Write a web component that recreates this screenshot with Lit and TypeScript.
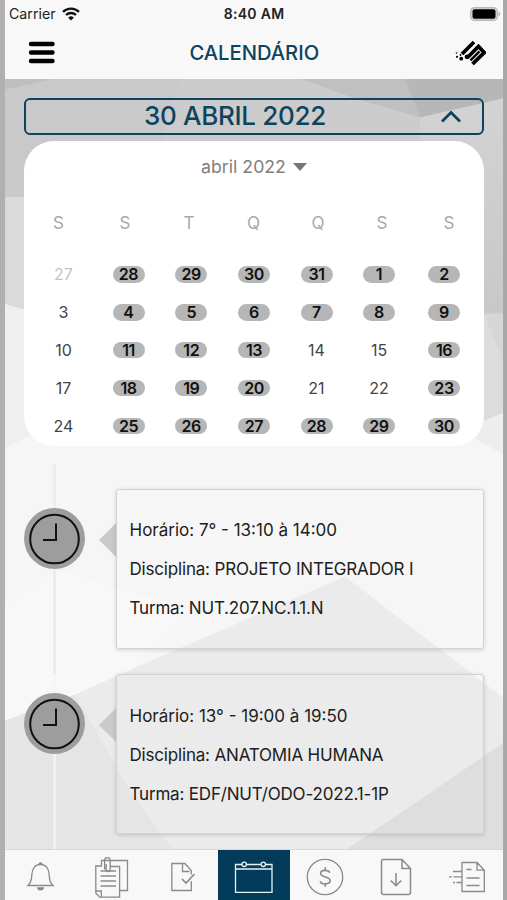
import { LitElement, html, css, svg } from "lit";
import { customElement, property } from "lit/decorators.js";
import { classMap } from "lit/directives/class-map.js";

interface Day { n: number; marked?: boolean; outside?: boolean }
interface Lesson { time: string; subject: string; group: string }

const m = (n: number): Day => ({ n, marked: true });
const p = (n: number): Day => ({ n });

const WEEKDAYS = ["S", "S", "T", "Q", "Q", "S", "S"];
const WEEKS: Day[][] = [
  [{ n: 27, outside: true }, m(28), m(29), m(30), m(31), m(1), m(2)],
  [p(3), m(4), m(5), m(6), m(7), m(8), m(9)],
  [p(10), m(11), m(12), m(13), p(14), p(15), m(16)],
  [p(17), m(18), m(19), m(20), p(21), p(22), m(23)],
  [p(24), m(25), m(26), m(27), m(28), m(29), m(30)],
];
const LESSONS: Lesson[] = [
  { time: "7° - 13:10 à 14:00", subject: "PROJETO INTEGRADOR I", group: "NUT.207.NC.1.1.N" },
  { time: "13° - 19:00 à 19:50", subject: "ANATOMIA HUMANA", group: "EDF/NUT/ODO-2022.1-1P" },
];

const bell = svg`<g transform="translate(-4.500 0)"><path d="M27.500 45.500c3.200-2.600 3.600-5.500 3.800-10.500c.2-6 3.200-10.500 8.700-10.500s8.500 4.500 8.700 10.500c.2 5 .6 7.900 3.800 10.500z"/><path d="M38.500 24.300a1.500 1.500 0 0 1 3 0M37.200 48h5.600c-.6 2.300-5 2.300-5.600 0z" fill="currentColor"/></g>`;
const notes = svg`<g transform="translate(-4 0)"><path d="M30 26h-6.200v27l3.800 4.200h20V26.500H38M23.800 51h5.500v6M29.500 25.500v-5h26v30h-7.500M28.500 31H44M28.500 36H44M28.500 41H44M28.500 46H44"/><path d="M33.700 24.500v5.500a2 2 0 0 0 4 0v-9a2.800 2.800 0 0 0-5.600 0v9" transform="translate(.5 -.5)"/></g>`;
const docCheck = svg`<g transform="translate(-4 0)"><path d="M48.300 41V50.500H28.800V23.500h13l6.500 7v4M39.500 23.500v8h7"/><path d="M39 39l4 4 8.500-9" stroke-width="1.700"/></g>`;
const calendar = svg`<path d="M24 24.500H17.500V52.300H54V24.500h-6.500M43 24.500H28.500M17.500 29H54"/><circle cx="26.200" cy="24.300" r="2.200"/><circle cx="45.300" cy="24.300" r="2.200"/>`;
const dollar = svg`<circle cx="36" cy="37" r="17.700"/><path d="M40.800 32.800c-1-3.200-9.200-3.400-9.200.7s9.600 2.800 9.600 7-9 4.600-10 .8M36.200 27.300v3M36.200 43.500v3.200" stroke-width="1.600"/>`;
const download = svg`<path d="M42 19.500H23.500a2 2 0 0 0-2 2v31a2 2 0 0 0 2 2h25a2 2 0 0 0 2-2V28.500zM42 19.500v9h8.500M36 33v12.500M30.700 40.500l5.300 5.200 5.300-5.200" stroke-width="1.500"/>`;
const send = svg`<path d="M31 22.500h15l7.300 7.700V51.500H31zM46 22.500v7.700h7.300M35.500 29.500h5M35.500 38h13M35.500 45.500h13M22 31.500h9M18 36.800h3M22.500 36.800h8.500M22 42.500h2M25.500 42.500h5.500"/>`;

@customElement("lesson-entry")
class LessonEntry extends LitElement {
  @property({ attribute: false }) lesson!: Lesson;
  static styles = css`
    :host { display: flex; align-items: flex-start; height: 160px; }
    .clock { width: 61px; height: 61px; margin-top: 19px; flex: none; }
    .arrow { width: 17px; height: 34px; margin: 34px 0 0 14px; flex: none; }
    .card {
      flex: 1; height: 160px; box-sizing: border-box; padding: 21.500px 0 0 12.500px;
      border: 1px solid #d2d2d2; border-radius: 3px; box-shadow: 0 1px 4px rgba(0,0,0,.16);
    }
    .line { height: 39px; line-height: 39px; font-size: 17px; letter-spacing: -.18px; color: #202020; white-space: nowrap; }
    .time { letter-spacing: 0; }
  `;
  render() {
    const { time, subject, group } = this.lesson;
    return html`
      <svg class="clock" viewBox="0 0 61 61" fill="none" stroke="#111" stroke-width="2">
        <circle cx="30.500" cy="30.500" r="30.500" fill="#9d9d9d" stroke="none"/>
        <circle cx="30.500" cy="31" r="24.300"/>
        <path d="M32 15.500V32H19"/>
      </svg>
      <svg class="arrow" viewBox="0 0 17 34"><path d="M17 0V34L0 17z" fill="#cacaca"/></svg>
      <div class="card">
        <div class="line time">Horário: ${time}</div>
        <div class="line">Disciplina: ${subject}</div>
        <div class="line">Turma: ${group}</div>
      </div>`;
  }
}

@customElement("app-root")
class AppRoot extends LitElement {
  static styles = css`
    :host {
      display: flex; flex-direction: column; position: relative; box-sizing: border-box;
      width: 507px; height: 900px; overflow: hidden;
      border-left: 5px solid #b0b0b0; border-right: 4px solid #a9a9a9;
      background: #f8f8f8; font-family: Inter, "Liberation Sans", sans-serif;
    }
    .status { display: grid; grid-template-columns: 1fr auto 1fr; align-items: center; height: 27px; padding: 0 2px 0 4px; flex: none; font-size: 14.200px; color: #222; }
    .carrier { display: flex; align-items: center; gap: 6px; }
    .clocktime { font-weight: 600; font-size: 14px; letter-spacing: .3px; margin-right: 2px; }
    .battery { justify-self: end; }
    .nav { display: grid; grid-template-columns: 1fr auto 1fr; align-items: center; height: 51.500px; padding: 0 17px 0 22.500px; flex: none; }
    .title { font-size: 20.200px; font-weight: 500; color: #0c435f; margin-right: 5px; margin-top: -1px; }
    .logo { justify-self: end; }
    svg { display: block; }
    .content { flex: 1; min-height: 0; position: relative; overflow: hidden; }
    .facets { position: absolute; inset: 0; width: 498px; height: 771px; }
    .stack { position: relative; padding: 19.500px 19px 0 19px; }
    .datebar { display: grid; grid-template-columns: 1fr 62px; align-items: center; height: 37px; box-sizing: border-box; border: 2.500px solid #0c4460; border-radius: 6px; color: #0c4460; }
    .date { text-align: center; font-size: 26px; font-weight: 500; letter-spacing: -.3px; line-height: 30px; padding-left: 24px; margin-top: -1px; }
    .chevron { margin-left: 20px; }
    .calendar { height: 305px; margin-top: 6px; box-sizing: border-box; background: #fff; border-radius: 30px; padding-top: 13.500px; }
    .month { display: flex; justify-content: center; align-items: center; gap: 7px; height: 24px; font-size: 17.700px; color: #7e7e7e; }
    .weekdays { display: grid; grid-template-columns: 65px 68px 60px 69px 60px 68px 66px; padding-left: 2px; margin-top: 32px; height: 24px; line-height: 24px; font-size: 17px; color: #a9a9a9; text-align: center; }
    .weeks { margin-top: 21px; }
    .week { display: grid; grid-template-columns: 65px 65px 60.500px 65px 60px 65px 65px; padding-left: 7px; height: 37.850px; align-items: center; justify-items: center; }
    .day { width: 32px; height: 16.500px; line-height: 17px; border-radius: 9px; text-align: center; font-size: 16px; color: #444; }
    .outside { color: #c4c4c4; }
    .marked { background: #b6b6b6; color: #111; font-weight: 600; letter-spacing: -.4px; }
    .timeline { position: relative; display: flex; flex-direction: column; gap: 25.500px; padding-top: 42.500px; }
    .rail { position: absolute; left: 29px; top: 18px; width: 3px; height: 210px; background: rgba(232,232,232,.7); }
    .rail.low { top: 228px; height: 180px; background: rgba(244,244,244,.8); }
    .entry { position: relative; }
    .tabs { display: grid; grid-template-columns: repeat(7, 1fr); height: 50.500px; flex: none; background: #f8f8f8; box-sizing: border-box; box-shadow: 0 -1px 0 #d8d8d8; position: relative; }
    .tab { display: flex; justify-content: center; color: #8a8a8a; overflow: hidden; }
    .active { background: #033c5a; color: #e8f0f4; }
    .glyph { width: 72px; height: 60px; flex: none; margin-top: -9.500px; fill: none; stroke: currentColor; stroke-width: 1.300; }
  `;
  render() {
    return html`
      <div class="status">
        <div class="carrier">Carrier
          <svg width="18" height="14" viewBox="0 0 18 14" fill="none" stroke="#111" stroke-width="2.300">
            <path d="M1 4.800a11.500 11.500 0 0 1 16 0M4 8a7.200 7.200 0 0 1 10 0"/><path d="M9 13.500L6.200 10.700a4 4 0 0 1 5.600 0z" fill="#111" stroke="none"/>
          </svg>
        </div>
        <div class="clocktime">8:40 AM</div>
        <svg class="battery" width="31" height="14" viewBox="0 0 31 14">
          <rect x=".7" y=".7" width="26.600" height="12.600" rx="3.800" fill="#ddd" stroke="#b9b9b9" stroke-width="1.400"/>
          <rect x="2.500" y="2.300" width="23" height="9.400" rx="2" fill="#000"/><path d="M28.500 4.500c2.300.8 2.300 4.200 0 5z" fill="#b5b5b5"/>
        </svg>
      </div>
      <div class="nav">
        <svg width="28" height="23" viewBox="0 0 28 23" stroke="#000" stroke-width="4.400" stroke-linecap="round"><path d="M3 3H24.500M3 11.500H24.500M3 20H24.500"/></svg>
        <div class="title">CALENDÁRIO</div>
        <svg class="logo" width="31" height="25" viewBox="0 0 31 25" fill="none" stroke="#000" stroke-width="3.800">
          <path d="M7 14L19 2"/>
          <path d="M12.500 17.500L23.500 6.500L29.200 12.500L17.500 24"/>
          <path d="M15.500 20.300L24.500 11.300" stroke-width="2.400"/>
          <g fill="#000" stroke="none"><circle cx="12" cy="16.800" r="2.400"/><circle cx="6.200" cy="18.700" r="1.900"/><circle cx="2" cy="16.800" r="1.100"/><circle cx="1.500" cy="13" r=".8"/><circle cx="5.500" cy="15" r=".9"/></g>
        </svg>
      </div>
      <div class="content">
        <svg class="facets" viewBox="5 78.500 498 771" preserveAspectRatio="none">
          <defs><linearGradient id="side" x1="0" y1="0" x2="0" y2="1"><stop offset="0" stop-color="#d3d3d3"/><stop offset="1" stop-color="#c8c8c8"/></linearGradient></defs>
          <rect x="0" y="78" width="507" height="119" fill="#c9c9c9"/>
          <path d="M0 78H56L0 90z" fill="#bfbfbf"/>
          <path d="M183 78H300L420 117V197H150L172 100z" fill="#cccccc"/>
          <path d="M300 78H507V97L420 117L355 98z" fill="#c0c0c0"/>
          <path d="M405 78H507V97L420 117z" fill="#b7b7b7"/>
          <path d="M0 197H300V320H0z" fill="#dadada"/>
          <path d="M420 117L507 97V315H420z" fill="url(#side)"/>
          <path d="M0 302L24 309L300 313V860H0z" fill="#efefef"/>
          <path d="M300 313L507 316V450H300z" fill="#dcdcdc"/>
          <path d="M484 313H507V370z" fill="#d6d6d6"/>
          <path d="M470 426L507 411V470H460z" fill="#ededed"/>
          <path d="M0 450L30 435H470L507 456V860H0z" fill="#f6f6f6"/>
          <path d="M0 610L60 570L190 610L110 690L0 722z" fill="#f8f8f8"/>
          <path d="M0 722L75 694L140 665L345 576L507 700V860H0z" fill="#ebebeb"/>
          <path d="M0 722L75 694L130 790L180 860H0z" fill="#e5e5e5"/>
          <path d="M345 850L507 740V860H330z" fill="#dedede"/>
        </svg>
        <div class="stack">
          <div class="datebar">
            <div class="date">30 ABRIL 2022</div>
            <svg class="chevron" width="22" height="14" viewBox="0 0 22 14" fill="none" stroke="#0c4460" stroke-width="2.800"><path d="M2 11.500L11 2.500L20 11.500"/></svg>
          </div>
          <div class="calendar">
            <div class="month"><span>abril 2022</span><svg width="14" height="8" viewBox="0 0 14 8"><path d="M0 0H14L7 8z" fill="#757575"/></svg></div>
            <div class="weekdays">${WEEKDAYS.map((d) => html`<span>${d}</span>`)}</div>
            <div class="weeks">${WEEKS.map((w) => html`<div class="week">${w.map((d) => html`
              <span class=${classMap({ day: true, marked: !!d.marked, outside: !!d.outside })}>${d.n}</span>`)}</div>`)}</div>
          </div>
          <div class="timeline">
            <div class="rail"></div>
            <div class="rail low"></div>
            ${LESSONS.map((l) => html`<lesson-entry class="entry" .lesson=${l}></lesson-entry>`)}
          </div>
        </div>
      </div>
      <div class="tabs">
        ${[bell, notes, docCheck, calendar, dollar, download, send].map((icon, i) => html`
          <div class=${classMap({ tab: true, active: i === 3 })}><svg class="glyph" viewBox="0 0 72 60">${icon}</svg></div>`)}
      </div>`;
  }
}
